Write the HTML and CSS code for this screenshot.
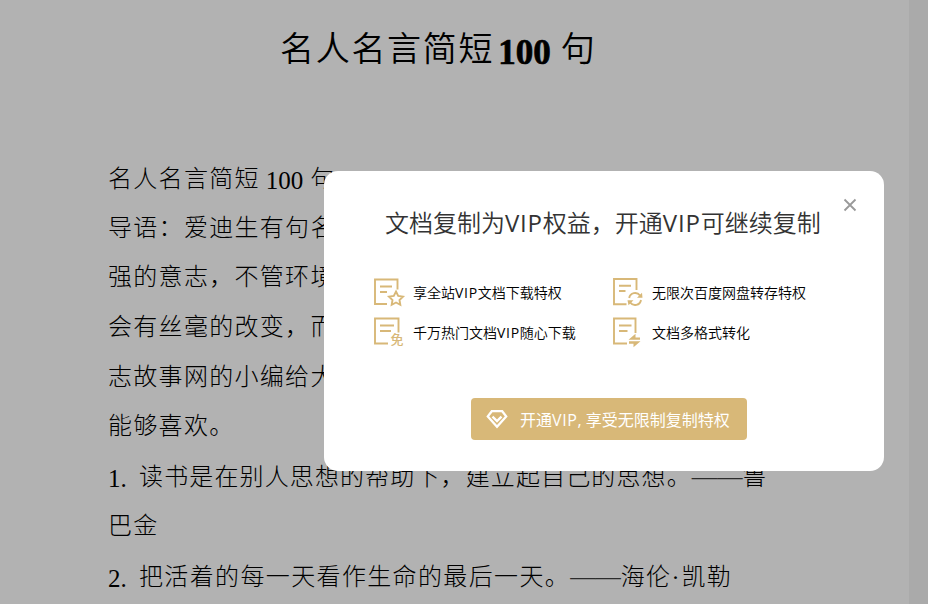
FILE: index.html
```html
<!DOCTYPE html>
<html lang="zh-CN">
<head>
<meta charset="utf-8">
<title>名人名言简短100句</title>
<link rel="stylesheet" href="styles.css">
</head>
<body>
<main class="page">
  <h1 class="title"><span>名人名言简短</span><b class="title-num">100</b><span>句</span></h1>
  <div class="text">
    <p>名人名言简短<span class="num">100</span>句</p>
    <p>导语：爱迪生有句名</p>
    <p>强的意志，不管环境</p>
    <p>会有丝毫的改变，而</p>
    <p>志故事网的小编给大</p>
    <p>能够喜欢。</p>
    <p class="quote"><span class="index">1.</span>读书是在别人思想的帮助下，建立起自己的思想。<span class="dash">——</span>鲁</p>
    <p>巴金</p>
    <p class="quote wide"><span class="index">2.</span>把活着的每一天看作生命的最后一天。<span class="dash">——</span>海伦<span class="dot">·</span>凯勒</p>
  </div>
</main>
<div class="overlay">
  <section class="modal">
    <svg class="close" viewBox="0 0 14 14"><path d="M1.5 1.5l11 11M12.5 1.5l-11 11"/></svg>
    <h2 class="heading">文档复制为<span class="vip">VIP</span>权益，开通<span class="vip">VIP</span>可继续复制</h2>
    <ul class="features">
      <li>
        <svg class="icon" viewBox="0 -1 32 32"><path d="M15 27H3V2.500h22.500v10M8 9.500h12M8 15h7"/><path d="M24 14.500l2.200 4.400 4.800.7-3.500 3.400.8 4.800-4.300-2.300-4.300 2.300.8-4.800-3.500-3.400 4.800-.7z"/></svg>
        <span>享全站<b class="vip">VIP</b>文档下载特权</span>
      </li>
      <li>
        <svg class="icon" viewBox="0 -1 32 32"><path d="M15.500 27.200H3V2h22.500v11M8 8.800h12M8 14h6.500"/><path d="M18.200 21a6 6 0 0 1 10.800-2.500M30 23a6 6 0 0 1-10.800 2.500"/><path class="solid" d="M26 20.800h5.500l-.5-5zM16.500 23.200h6l-5 5z"/></svg>
        <span>无限次百度网盘转存特权</span>
      </li>
      <li>
        <svg class="icon" viewBox="0 -1 32 32"><path d="M16 26.500H3V1.500h23.500v14M8 8.500h14M8 14h11"/><text x="18.500" y="27">免</text></svg>
        <span>千万热门文档<b class="vip">VIP</b>随心下载</span>
      </li>
      <li>
        <svg class="icon" viewBox="0 -1 32 32"><path d="M16 26.500H3V1.500h21.500v14.500M8 8.500h12.500M8 14h8.500"/><path class="solid" d="M17.500 22.800l7-6v3.700h4.500v2.300zM29.500 24.200l-7 6v-3.500H18v-2.500z"/></svg>
        <span>文档多格式转化</span>
      </li>
    </ul>
    <div class="button">
      <svg class="gem" viewBox="0 0 22 20"><path d="M5.800 2.200h10.400l4 5.200L11 17.800 1.800 7.400z"/><path d="M6.500 7.600l4.500 4.500 4.500-4.500"/></svg>
      <span>开通<span class="vip">VIP</span>, 享受无限制复制特权</span>
    </div>
  </section>
</div>
</body>
</html>
```
FILE: styles.css
```css
* { box-sizing: border-box; }
body {
  margin: 0;
  height: 604px;
  overflow: hidden;
  position: relative;
  background: #f4f4f4;
}
p, h1, h2, ul { margin: 0; padding: 0; font-weight: 400; }
.page {
  width: 909px;
  height: 604px;
  overflow: hidden;
  padding: 25px 0 0 108px;
  background: #fff;
  color: #000;
  font-family: "Liberation Serif", "Noto Sans CJK SC", serif;
  white-space: nowrap;
}
.title {
  display: flex;
  align-items: baseline;
  margin-left: 172px;
  height: 129px;
  line-height: 50px;
  font-size: 34px;
  font-weight: 350;
  letter-spacing: 1.7px;
}
.title-num {
  position: relative;
  top: 3px;
  margin: 0 10px 0 4px;
  font-size: 35px;
  font-weight: 700;
  letter-spacing: 0;
  -webkit-text-stroke: 0.7px #000;
}
.text p {
  height: 49.7px;
  line-height: 49.7px;
  font-size: 24px;
  font-weight: 300;
  letter-spacing: 1.3px;
}
.text .num { position: relative; top: 2px; margin: 0 7px 0 6px; font-size: 25px; letter-spacing: 0; }
.text .quote { letter-spacing: 1.13px; }
.text .wide { letter-spacing: 1.36px; }
.index { position: relative; top: 2px; display: inline-block; width: 31px; line-height: 1; font-size: 25px; letter-spacing: 0; }
.dash { font-size: 25.3px; letter-spacing: 0; opacity: .75; }
.dot { letter-spacing: 2px; }
.overlay {
  position: absolute;
  inset: 0;
  padding: 171px 0 0 324px;
  background: rgba(0, 0, 0, .3);
}
.modal {
  position: relative;
  width: 560px;
  height: 300px;
  padding-top: 33px;
  border-radius: 14px;
  background: #fff;
  font-family: "Open Sans", "Noto Sans CJK SC", sans-serif;
  white-space: nowrap;
}
.close {
  position: absolute;
  top: 27px;
  right: 27px;
  width: 14px;
  height: 14px;
  fill: none;
  stroke: #999;
  stroke-width: 1.8;
}
.heading {
  padding-left: 61px;
  line-height: 38px;
  font-size: 24px;
  font-weight: 350;
  color: #333;
}
.vip { font-weight: 400; }
.heading .vip { letter-spacing: .8px; }
.features {
  display: grid;
  grid-template-columns: 239px 239px;
  grid-auto-rows: 40px;
  padding: 30px 0 0 48px;
  list-style: none;
  font-size: 14px;
  font-weight: 350;
  color: #000;
}
.features li { display: flex; align-items: center; gap: 9px; }
.features .vip { letter-spacing: .7px; }
.icon {
  width: 32px;
  height: 32px;
  fill: none;
  stroke: #d8b878;
  stroke-width: 1.9;
  overflow: visible;
}
.icon .solid { fill: #d8b878; stroke: none; }
.icon text {
  fill: #d8b878;
  stroke: none;
  font-size: 13px;
  font-weight: 500;
}
.button {
  display: flex;
  align-items: center;
  width: 276px;
  height: 42px;
  margin: 46px 0 0 147px;
  padding-left: 15px;
  gap: 12px;
  border-radius: 4px;
  background: #d8b878;
  color: #fff;
  font-size: 16px;
}
.button .vip { letter-spacing: .6px; }
.gem { width: 22px; height: 20px; fill: none; stroke: #fff; stroke-width: 2.3; }
```
